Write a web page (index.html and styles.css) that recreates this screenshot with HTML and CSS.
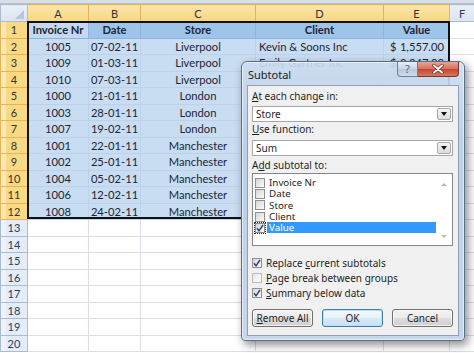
FILE: index.html
```html
<!DOCTYPE html>
<html lang="en">
<head>
    <meta charset="UTF-8">
    <meta name="viewport" content="width=device-width, initial-scale=1.0">
    <title>Subtotal</title>
    <link rel="stylesheet" href="styles.css">
</head>
<body>
    <div class="window">
        <div class="strip"></div>
        <table class="sheet">
            <colgroup>
                <col class="col-num"><col class="col-a"><col class="col-b"><col class="col-c"><col class="col-d"><col class="col-e"><col class="col-f">
            </colgroup>
            <tr class="letters">
                <th class="corner"><span class="tri"></span></th>
                <th class="on">A</th>
                <th class="on">B</th>
                <th class="on">C</th>
                <th class="on">D</th>
                <th class="on">E</th>
                <th>F</th>
            </tr>
            <tr class="heads">
                <th class="num on">1</th>
                <td class="active">Invoice Nr</td>
                <td>Date</td>
                <td>Store</td>
                <td>Client</td>
                <td>Value</td>
                <td class="free"></td>
            </tr>
            <tr class="data">
                <th class="num on">2</th>
                <td>1005</td><td>07-02-11</td><td>Liverpool</td>
                <td class="left">Kevin &amp; Soons Inc</td>
                <td><div class="money"><span>$</span><span>1,557.00</span></div></td>
                <td class="free"></td>
            </tr>
            <tr class="data">
                <th class="num on">3</th>
                <td>1009</td><td>01-03-11</td><td>Liverpool</td>
                <td class="left">Emily Gartner Inc</td>
                <td><div class="money"><span>$</span><span>2,247.00</span></div></td>
                <td class="free"></td>
            </tr>
            <tr class="data">
                <th class="num on">4</th>
                <td>1010</td><td>07-03-11</td><td>Liverpool</td><td></td><td></td><td class="free"></td>
            </tr>
            <tr class="data">
                <th class="num on">5</th>
                <td>1000</td><td>21-01-11</td><td>London</td><td></td><td></td><td class="free"></td>
            </tr>
            <tr class="data">
                <th class="num on">6</th>
                <td>1003</td><td>28-01-11</td><td>London</td><td></td><td></td><td class="free"></td>
            </tr>
            <tr class="data">
                <th class="num on">7</th>
                <td>1007</td><td>19-02-11</td><td>London</td><td></td><td></td><td class="free"></td>
            </tr>
            <tr class="data">
                <th class="num on">8</th>
                <td>1001</td><td>22-01-11</td><td>Manchester</td><td></td><td></td><td class="free"></td>
            </tr>
            <tr class="data">
                <th class="num on">9</th>
                <td>1002</td><td>25-01-11</td><td>Manchester</td><td></td><td></td><td class="free"></td>
            </tr>
            <tr class="data">
                <th class="num on">10</th>
                <td>1004</td><td>05-02-11</td><td>Manchester</td><td></td><td></td><td class="free"></td>
            </tr>
            <tr class="data">
                <th class="num on">11</th>
                <td>1006</td><td>12-02-11</td><td>Manchester</td><td></td><td></td><td class="free"></td>
            </tr>
            <tr class="data">
                <th class="num on">12</th>
                <td>1008</td><td>24-02-11</td><td>Manchester</td><td></td><td></td><td class="free"></td>
            </tr>
            <tr class="empty"><th class="num">13</th><td></td><td></td><td></td><td></td><td></td><td></td></tr>
            <tr class="empty"><th class="num">14</th><td></td><td></td><td></td><td></td><td></td><td></td></tr>
            <tr class="empty"><th class="num">15</th><td></td><td></td><td></td><td></td><td></td><td></td></tr>
            <tr class="empty"><th class="num">16</th><td></td><td></td><td></td><td></td><td></td><td></td></tr>
            <tr class="empty"><th class="num">17</th><td></td><td></td><td></td><td></td><td></td><td></td></tr>
            <tr class="empty"><th class="num">18</th><td></td><td></td><td></td><td></td><td></td><td></td></tr>
            <tr class="empty"><th class="num">19</th><td></td><td></td><td></td><td></td><td></td><td></td></tr>
            <tr class="empty"><th class="num">20</th><td></td><td></td><td></td><td></td><td></td><td></td></tr>
        </table>
        <div class="selection"></div>

        <div class="dialog">
            <div class="titlebar">
                <span class="title">Subtotal</span>
                <span class="btn-help">?</span>
                <span class="btn-close">
                    <svg width="12" height="10" viewBox="0 0 12 10">
                        <path d="M2 1.5 L10 8.5 M10 1.5 L2 8.5" stroke="#7a2a22" stroke-width="3.4" stroke-linecap="round"/>
                        <path d="M2 1.5 L10 8.5 M10 1.5 L2 8.5" stroke="#fff" stroke-width="2" stroke-linecap="round"/>
                    </svg>
                </span>
            </div>
            <div class="client">
                <div class="lbl lbl-first"><u>A</u>t each change in:</div>
                <div class="combo combo-first"><span>Store</span><span class="drop"></span></div>
                <div class="lbl lbl-second"><u>U</u>se function:</div>
                <div class="combo combo-second"><span>Sum</span><span class="drop"></span></div>
                <div class="lbl lbl-third">A<u>d</u>d subtotal to:</div>
                <div class="listbox">
                    <div class="items">
                        <div class="item"><span class="box"></span><span class="txt">Invoice Nr</span></div>
                        <div class="item"><span class="box"></span><span class="txt">Date</span></div>
                        <div class="item"><span class="box"></span><span class="txt">Store</span></div>
                        <div class="item"><span class="box"></span><span class="txt">Client</span></div>
                        <div class="item chosen">
                            <span class="box checked focus"><svg width="8" height="8" viewBox="0 0 8 8"><path d="M1 4.2 L3 6.8 L7 1" fill="none" stroke="#2c3e66" stroke-width="1.4"/></svg></span>
                            <span class="txt">Value</span>
                        </div>
                    </div>
                    <div class="scroll">
                        <span class="up"></span>
                        <span class="down"></span>
                    </div>
                </div>
                <div class="opts">
                    <div class="opt"><span class="box checked"><svg width="8" height="8" viewBox="0 0 8 8"><path d="M1 4.2 L3 6.8 L7 1" fill="none" stroke="#2c3e66" stroke-width="1.4"/></svg></span><span>Replace <u>c</u>urrent subtotals</span></div>
                    <div class="opt"><span class="box pale"></span><span><u>P</u>age break between groups</span></div>
                    <div class="opt"><span class="box checked"><svg width="8" height="8" viewBox="0 0 8 8"><path d="M1 4.2 L3 6.8 L7 1" fill="none" stroke="#2c3e66" stroke-width="1.4"/></svg></span><span><u>S</u>ummary below data</span></div>
                </div>
                <div class="buttons">
                    <button class="btn"><u>R</u>emove All</button>
                    <button class="btn btn-ok">OK</button>
                    <button class="btn">Cancel</button>
                </div>
            </div>
        </div>
    </div>
</body>
</html>
```

FILE: styles.css
```css
*{
    margin: 0;
    padding: 0;
    box-sizing: border-box;
}
body{
    width: 474px;
    height: 353px;
    overflow: hidden;
    background-color: white;
}
.window{
    position: relative;
    width: 474px;
    height: 353px;
    overflow: hidden;
}
.strip{
    height: 4px;
    background-color: #d9dfe7;
    border-bottom: 1px solid #b4c0cf;
}

/* planilha */
.sheet{
    border-collapse: collapse;
    table-layout: fixed;
    width: 474px;
    font-family: Lato, "Liberation Sans", sans-serif;
    font-size: 11.2px;
    color: #1c2634;
}
.col-num{ width: 27px; }
.col-a{ width: 61px; }
.col-b{ width: 52px; }
.col-c{ width: 115px; }
.col-d{ width: 128px; }
.col-e{ width: 66px; }
.col-f{ width: 25px; }
.sheet td,
.sheet th{
    height: 16.5px;
    border: 1px solid #dadfe7;
    padding: 0 1px;
    white-space: nowrap;
    overflow: hidden;
    font-weight: normal;
    text-align: center;
    vertical-align: middle;
}
.letters th{
    height: 17px;
    background: linear-gradient(#e9eff7, #dbe4f0);
    border-color: #a9bcd2;
    color: #27415f;
    font-size: 11px;
}
.letters th.on{
    background: linear-gradient(#fce6ad, #f8d57f);
    border-color: #e1b65a;
    border-bottom-color: #f2a93b;
    color: #333;
}
.corner{
    position: relative;
}
.tri{
    position: absolute;
    right: 3px;
    bottom: 2px;
    width: 0;
    height: 0;
    border-left: 9px solid transparent;
    border-bottom: 9px solid #b8c6d8;
}
.num{
    background-color: #e4ecf7;
    border-color: #a9bcd2 !important;
    color: #27415f;
    font-size: 11px;
    box-shadow: inset 5px 0 0 #eef3fa;
}
.num.on{
    background: #f9d983;
    border-color: #e1b65a !important;
    color: #333;
    box-shadow: inset 5px 0 0 #fbe8b4;
}
.heads td{
    background-color: #9fc4ea;
    border-color: #8db5df;
    font-weight: bold;
}
.heads td.active{
    background-color: #c4d9f0;
}
.data td{
    background-color: #c8dcf2;
    border-color: #bcd2ea;
}
.sheet td.free{
    background-color: white;
    border-color: #dadfe7;
}
.left{
    text-align: left !important;
    padding-left: 3px !important;
}
.money{
    display: flex;
    justify-content: space-between;
    padding: 0 4px 0 5px;
}
.selection{
    position: absolute;
    left: 27px;
    top: 21px;
    width: 423px;
    height: 198px;
    border: 2px solid #111;
}

/* janela de subtotal */
.dialog{
    position: absolute;
    left: 241px;
    top: 61px;
    width: 224px;
    height: 280px;
    border: 1px solid #5b6e88;
    border-radius: 6px 6px 4px 4px;
    background: linear-gradient(rgba(204, 220, 240, 0.9), rgba(188, 207, 231, 0.96) 30%, rgba(196, 213, 235, 0.97));
    box-shadow: inset 0 0 0 1px rgba(255, 255, 255, 0.55), 3px 4px 10px rgba(0, 0, 0, 0.45);
    padding: 0 5px 4px 5px;
    display: flex;
    flex-direction: column;
    font-family: "Noto Sans", "Open Sans", sans-serif;
    color: #1e1e1e;
}
.titlebar{
    height: 25px;
    display: flex;
    align-items: flex-start;
}
.title{
    flex: 1;
    font-size: 11px;
    line-height: 14px;
    margin: 6px 0 0 1px;
}
.btn-help{
    width: 21px;
    height: 15px;
    border: 1px solid #6d7f96;
    border-top: none;
    border-radius: 0 0 0 4px;
    background: linear-gradient(#e6eef7, #c6d5e6 50%, #b5c7dc 51%, #cfdcea);
    color: #56657a;
    font-size: 11px;
    line-height: 13px;
    text-align: center;
}
.btn-close{
    width: 41px;
    height: 15px;
    border: 1px solid #6b3a34;
    border-top: none;
    border-left: none;
    border-radius: 0 0 4px 0;
    background: linear-gradient(#e8a493, #d46f5d 50%, #c4432e 51%, #d77a5e);
    display: flex;
    align-items: center;
    justify-content: center;
}
.client{
    flex: 1;
    background-color: #f0f0f0;
    border: 1px solid #8fa0b6;
    padding: 4px 5px 8px 4px;
    display: flex;
    flex-direction: column;
    font-size: 10px;
}
.lbl{
    height: 13px;
    line-height: 13px;
}
.lbl-second{ margin-top: 1px; }
.lbl-third{ margin-top: 3px; }
.combo{
    height: 16px;
    background-color: white;
    border: 1px solid #a6a6a6;
    display: flex;
    align-items: center;
    justify-content: space-between;
    padding: 0 1px 0 3px;
}
.combo-first{ margin-top: 3px; }
.combo-second{ margin-top: 4px; }
.drop{
    position: relative;
    width: 14px;
    height: 12px;
    border: 1px solid #a9a9a9;
    border-radius: 2px;
    background: linear-gradient(#f4f4f4, #dcdcdc);
}
.drop::after{
    content: "";
    position: absolute;
    left: 3px;
    top: 3px;
    border-left: 3.5px solid transparent;
    border-right: 3.5px solid transparent;
    border-top: 4px solid #111;
}
.listbox{
    margin-top: 1px;
    height: 73px;
    background-color: white;
    border: 1px solid #828790;
    display: flex;
    padding: 3px 0 0 2px;
}
.items{
    flex: 1;
}
.item{
    height: 11.3px;
    display: flex;
    align-items: center;
    font-size: 9.8px;
}
.item .box{
    margin-right: 2px;
}
.txt{
    padding: 0 2px;
    flex: 1;
    line-height: 11px;
}
.chosen .txt{
    background-color: #3399ff;
    color: white;
}
.box{
    width: 10px;
    height: 10px;
    border: 1px solid #8f8f8f;
    background: linear-gradient(135deg, #d6d6d6, #fbfbfb);
    display: flex;
    align-items: center;
    justify-content: center;
    flex-shrink: 0;
}
.box.pale{
    border-color: #bcbcbc;
    background: linear-gradient(135deg, #e6e6e6, #fcfcfc);
}
.box.focus{
    outline: 1px dotted #333;
    outline-offset: 0;
}
.scroll{
    width: 16px;
    display: flex;
    flex-direction: column;
    justify-content: space-between;
    align-items: center;
    padding: 6px 0 7px 0;
}
.up{
    border-left: 3px solid transparent;
    border-right: 3px solid transparent;
    border-bottom: 3px solid #b9b9b9;
}
.down{
    border-left: 3px solid transparent;
    border-right: 3px solid transparent;
    border-top: 3px solid #b9b9b9;
}
.opts{
    margin-top: 9px;
}
.opt{
    height: 15px;
    display: flex;
    align-items: center;
}
.opt .box{
    margin-right: 4px;
}
.buttons{
    margin-top: 9px;
    display: flex;
    justify-content: space-between;
}
.btn{
    width: 61px;
    height: 18px;
    border: 1px solid #707070;
    border-radius: 3px;
    background: linear-gradient(#f2f2f2, #ebebeb 50%, #dddddd 51%, #cfcfcf);
    box-shadow: inset 0 0 0 1px rgba(255, 255, 255, 0.7);
    font-family: "Noto Sans", "Open Sans", sans-serif;
    font-size: 10px;
    color: #1e1e1e;
}
.btn-ok{
    border-color: #3c7fb1;
    background: linear-gradient(#f4f9fd, #e7f2fb 50%, #d6e9f8 51%, #c9e1f5);
    box-shadow: inset 0 0 0 1px #b9e0f8;
}
```
